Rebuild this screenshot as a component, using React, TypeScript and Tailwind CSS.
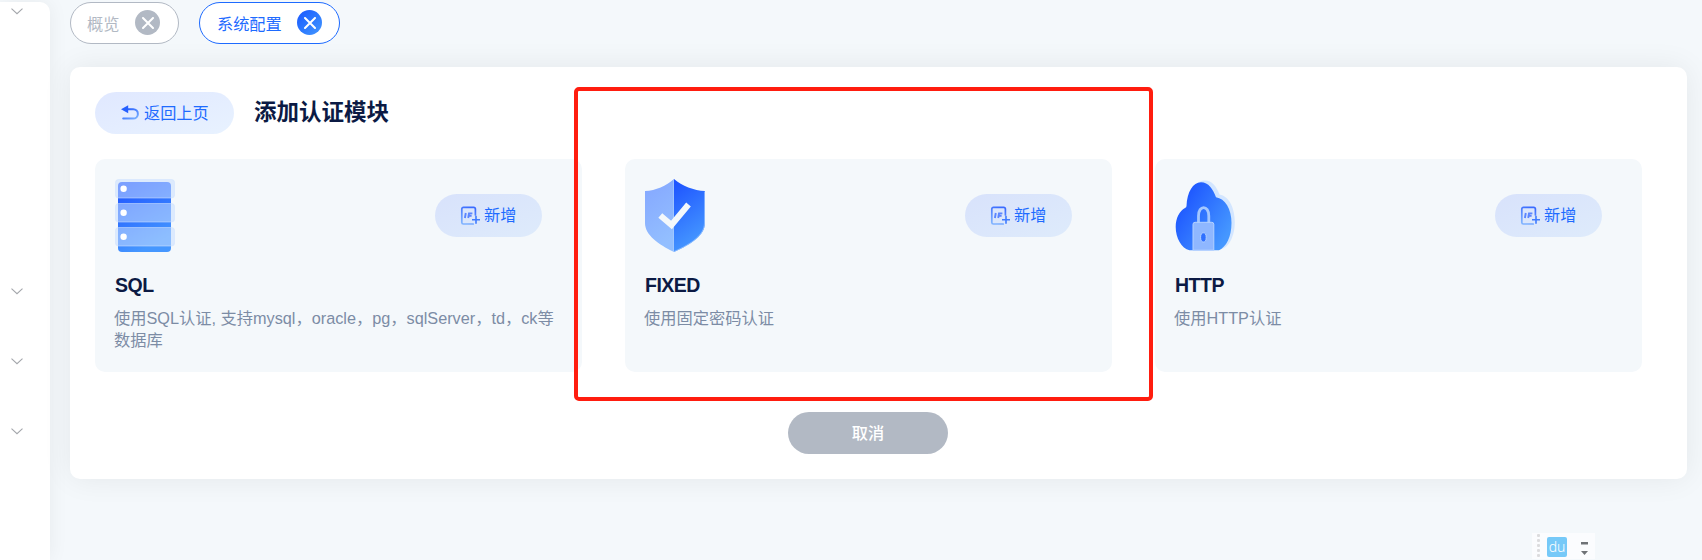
import type { ReactNode } from "react";

const SANS = "font-['Liberation_Sans','Noto_Sans_CJK_SC',sans-serif]";

function Chevron() {
  return (
    <svg className="block h-[7px] w-3" viewBox="0 0 12 7" fill="none" stroke="#a3a6ab" strokeWidth="1.1">
      <path d="M0.5 0.7 6 5.7 11.5 0.7" />
    </svg>
  );
}

function CloseDot({ active }: { active?: boolean }) {
  return (
    <span
      className={
        active
          ? "flex size-[25px] items-center justify-center rounded-full bg-linear-to-br from-[#1c54ff] to-[#4597ff]"
          : "flex size-[25px] items-center justify-center rounded-full bg-[#b2b9c4]"
      }
    >
      <svg className="size-3" viewBox="0 0 12 12" stroke="#fff" strokeWidth="2" strokeLinecap="round">
        <path d="M1 1 11 11M11 1 1 11" />
      </svg>
    </span>
  );
}

function Tab({ label, active }: { label: string; active?: boolean }) {
  return (
    <div
      className={
        active
          ? "flex h-[42px] w-[141px] items-center justify-between rounded-full border border-[#1e6bff] bg-white pr-[17px] pl-[17px] text-[#1e6bff]"
          : "flex h-[42px] w-[109px] items-center justify-between rounded-full border border-[#b2b9c4] bg-white pr-[18px] pl-4 text-[#b2b9c4]"
      }
    >
      <span className="relative top-px text-[16.2px] leading-none">{label}</span>
      <span className="mb-px">
        <CloseDot active={active} />
      </span>
    </div>
  );
}

function BackIcon() {
  return (
    <svg className="h-4 w-[18px]" viewBox="0 0 18 16" fill="none">
      <defs>
        <linearGradient id="back" x1="0" y1="0" x2="1" y2="1">
          <stop offset="0" stopColor="#1c54ff" />
          <stop offset="1" stopColor="#7db4ff" />
        </linearGradient>
      </defs>
      <path d="M5 4.2H12.2A4.7 4.7 0 0 1 12.2 13.6H2.2" stroke="url(#back)" strokeWidth="2" strokeLinecap="round" />
      <path d="M0 4.2 7.2 0.2V8.2Z" fill="#2660ff" />
    </svg>
  );
}

function AddIcon() {
  return (
    <svg className="size-5" viewBox="0 0 20 20" fill="none">
      <defs>
        <linearGradient id="add" x1="0.6" y1="0" x2="0.3" y2="1">
          <stop offset="0" stopColor="#3b6cff" />
          <stop offset="1" stopColor="#7fb2ff" />
        </linearGradient>
      </defs>
      <path
        d="M15.4 9V3A1.6 1.6 0 0 0 13.8 1.4H3.4A1.6 1.6 0 0 0 1.8 3V16.4A1.6 1.6 0 0 0 3.4 18H13.2"
        stroke="url(#add)"
        strokeWidth="1.7"
        strokeLinecap="round"
      />
      <path d="M16 9.8V17.8M12 13.8H20" stroke="#3f7bff" strokeWidth="1.6" />
      <path d="M5.8 7 4.9 12M8.2 12 9 7.4H12.4M8.8 9.7H11.6" stroke="#5b85ff" strokeWidth="1.9" />
    </svg>
  );
}

function ServerIcon() {
  return (
    <svg className="h-[73px] w-[60px]" viewBox="0 0 60 73">
      <defs>
        <linearGradient id="rack" x1="0" y1="0" x2="0.4" y2="1">
          <stop offset="0" stopColor="#1c50ff" />
          <stop offset="1" stopColor="#4597ff" />
        </linearGradient>
      </defs>
      <rect x="3" y="3" width="53" height="70" rx="4" fill="url(#rack)" />
      {[0, 24, 48].map((y) => (
        <g key={y}>
          <rect x="0.5" y={y + 0.5} width="59" height="18.5" rx="3" fill="#c9dfff" fillOpacity="0.55" stroke="#cfe2ff" strokeOpacity="0.55" />
          <circle cx="8.6" cy={y + 9.7} r="3.2" fill="#fff" />
        </g>
      ))}
    </svg>
  );
}

function ShieldIcon() {
  return (
    <svg className="h-[73px] w-[60px]" viewBox="0 0 60 73">
      <defs>
        <linearGradient id="shield" x1="0" y1="0" x2="0.3" y2="1">
          <stop offset="0" stopColor="#1c50ff" />
          <stop offset="1" stopColor="#4597ff" />
        </linearGradient>
        <linearGradient id="shieldLight" x1="0" y1="0" x2="0.3" y2="1">
          <stop offset="0" stopColor="#84a6ff" />
          <stop offset="1" stopColor="#93bfff" />
        </linearGradient>
      </defs>
      <path d="M29 0C37 7 49 11.5 60 12V44C60 56 47 65 29 73Z" fill="url(#shield)" />
      <path d="M29 0C21 7 11 11.5 0 12V44C0 56 13 65 29 73Z" fill="url(#shieldLight)" />
      <path d="M59.5 12.5V44C59.5 55.5 47 64.7 29 72.5M28.5 1V72" fill="none" stroke="#a9ccff" strokeOpacity="0.65" />
      <path d="M15.3 36.5 26.5 46 43.5 25.5" fill="none" stroke="#f4f8fb" strokeWidth="6" />
    </svg>
  );
}

function CloudLockIcon() {
  return (
    <svg className="h-[73px] w-[60px]" viewBox="0 0 60 73">
      <defs>
        <linearGradient id="cloud" x1="0.1" y1="0.2" x2="0.9" y2="0.8">
          <stop offset="0" stopColor="#1c54ff" />
          <stop offset="1" stopColor="#4597ff" />
        </linearGradient>
      </defs>
      <path
        d="M14 24C16 8 22 1.5 30 1.5C37 1.5 41.5 7.5 44.5 15.5C54 17 59.8 29 59.8 43C59.8 57 54 70 43 71H17Z"
        fill="#d3e6ff"
      />
      <path
        d="M11.5 27C12 13 18 3.2 26 3.2C33.5 3.2 38 10 41 18.3C50 19.5 56.5 30 56.5 44C56.5 58 51 68 44 71.2H14.5C6.5 69.5 0.7 59 0.7 48C0.7 39 4.5 32 10 29Q11.5 28.3 11.5 27Z"
        fill="url(#cloud)"
      />
      <path d="M23.5 44V37C23.5 25.7 33.8 25.7 33.8 37V44" fill="none" stroke="#a4c7ff" strokeWidth="2.8" />
      <path d="M20 43.3H36.8A2 2 0 0 1 38.8 45.3V71.2H18V45.3A2 2 0 0 1 20 43.3Z" fill="#8fb7ff" stroke="#b5d2ff" />
      <ellipse cx="28.4" cy="58.4" rx="2.8" ry="4.6" fill="#2f70ff" stroke="#b5d2ff" />
    </svg>
  );
}

function ModuleCard({ icon, title, text }: { icon: ReactNode; title: string; text: string }) {
  return (
    <div className="h-[213px] w-[487px] rounded-[10px] bg-[#f4f8fb] px-5 pt-5">
      <div className="flex items-start justify-between pr-5">
        {icon}
        <button className="mt-[15px] flex h-[43px] w-[107px] items-center rounded-full bg-linear-to-br from-[#d8e2fb] to-[#deebfb] pl-[25px] text-[#1e6bff]">
          <AddIcon />
          <span className="ml-1 text-[16.2px] leading-none">新增</span>
        </button>
      </div>
      <h2 className="mt-[21px] text-[19.5px] leading-6 font-bold tracking-[-0.5px] text-[#0b1a44]">{title}</h2>
      <p className="mt-[10px] -ml-px text-[16.25px] leading-[22px] whitespace-pre-line text-[#7c8ca5]">{text}</p>
    </div>
  );
}

export default function App() {
  return (
    <div className={`relative flex h-[560px] w-[1702px] overflow-hidden bg-[#f4f8fb] ${SANS}`}>
      <aside className="mt-[2px] flex w-[50px] flex-col rounded-tr-[10px] bg-white pt-[6px] pl-[11px] shadow-[0_0_20px_rgba(0,0,0,0.06)]">
        <Chevron />
        <div className="mt-[273px] flex flex-col gap-[63px]">
          <Chevron />
          <Chevron />
          <Chevron />
        </div>
      </aside>

      <main className="flex flex-1 flex-col pt-[2px] pr-[15px] pl-5">
        <nav className="flex gap-5">
          <Tab label="概览" />
          <Tab label="系统配置" active />
        </nav>

        <section className="mt-[23px] h-[412px] rounded-[10px] bg-white px-[25px] pt-[25px] shadow-[0_0_30px_rgba(0,0,0,0.07)]">
          <header className="flex items-center gap-5">
            <button className="flex h-[42px] w-[139px] items-center rounded-full bg-linear-to-br from-[#e0e8ff] to-[#e8f2ff] pl-[26px] text-[#1e6bff]">
              <BackIcon />
              <span className="ml-[5px] text-[16.2px] leading-none">返回上页</span>
            </button>
            <h1 className="text-[22.5px] leading-none font-bold text-[#0b1a44]">添加认证模块</h1>
          </header>

          <div className="mt-[25px] flex gap-[43px]">
            <ModuleCard
              icon={<ServerIcon />}
              title="SQL"
              text={"使用SQL认证, 支持mysql，oracle，pg，sqlServer，td，ck等\n数据库"}
            />
            <ModuleCard icon={<ShieldIcon />} title="FIXED" text="使用固定密码认证" />
            <ModuleCard icon={<CloudLockIcon />} title="HTTP" text="使用HTTP认证" />
          </div>

          <div className="mt-10 flex pl-[693px]">
            <button className="h-[42px] w-40 rounded-full bg-[#b2b9c4] text-[16.2px] leading-none font-medium text-white">取消</button>
          </div>
        </section>
      </main>

      <div className="absolute top-[87px] left-[574px] h-[314px] w-[579px] rounded-[5px] border-4 border-[#ff1d0f]" />

      <div className="absolute top-[533px] left-[1532px] flex h-[26px] w-[63px] items-center bg-[#fbfcfe] pl-[5px]">
        <svg className="h-[26px] w-[3px]" viewBox="0 0 3 26" fill="#dcdcde">
          {[1, 6, 11, 16, 21].map((y) => (
            <rect key={y} x="0" y={y} width="3" height="3" rx="1" />
          ))}
        </svg>
        <span className="mt-[2px] ml-[7px] flex size-5 items-center justify-center rounded-[2px] bg-[#76c9f8] font-['Noto_Sans',sans-serif] text-[14px] leading-none font-light text-white">
          du
        </span>
        <svg className="mt-1 ml-[14px] h-[14px] w-[7px]" viewBox="0 0 7 14" fill="#6f7276">
          <rect x="0" y="1" width="7" height="2.5" />
          <path d="M0 10H7L3.5 14Z" />
        </svg>
      </div>
    </div>
  );
}
